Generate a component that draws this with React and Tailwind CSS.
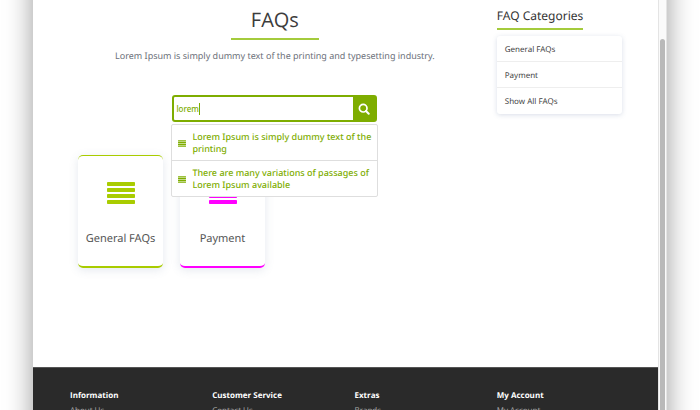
import React from "react";

const categories = ["General FAQs", "Payment", "Show All FAQs"];

const suggestions = [
  "Lorem Ipsum is simply dummy text of the printing",
  "There are many variations of passages of Lorem Ipsum available",
];

const footerColumns = [
  { title: "Information", link: "About Us" },
  { title: "Customer Service", link: "Contact Us" },
  { title: "Extras", link: "Brands" },
  { title: "My Account", link: "My Account" },
];

function BarsIcon({ className }) {
  return (
    <svg viewBox="0 0 28 22" className={className} fill="currentColor" aria-hidden="true">
      <rect x="0" y="0" width="28" height="4" rx="0.8" />
      <rect x="0" y="6" width="28" height="4" rx="0.8" />
      <rect x="0" y="12" width="28" height="4" rx="0.8" />
      <rect x="0" y="18" width="28" height="4" rx="0.8" />
    </svg>
  );
}

function SearchIcon() {
  return (
    <svg viewBox="0 0 12 12" className="size-3" fill="none" stroke="currentColor" aria-hidden="true">
      <circle cx="5.2" cy="5.2" r="3.8" strokeWidth="1.7" />
      <path d="M8 8l2.7 2.7" strokeWidth="2" strokeLinecap="round" />
    </svg>
  );
}

function Search() {
  return (
    <form className="relative mx-auto mt-8 w-[205px]" onSubmit={(e) => e.preventDefault()}>
      <div className="flex h-[27px] overflow-hidden rounded-[3px] border-2 border-[#7ead00] bg-[#7ead00]">
        <input
          aria-label="Search FAQs"
          defaultValue="lorem"
          className="min-w-0 flex-1 bg-white px-[2px] text-[8px] font-medium text-[#7ead00] outline-none"
        />
        <button type="submit" aria-label="Search" className="flex w-[22px] items-center justify-center text-white">
          <SearchIcon />
        </button>
      </div>
      <span className="absolute top-2 left-[27px] h-3 w-px bg-[#7ead00]" />
      <ul className="absolute top-[29px] -right-px -left-px z-10 rounded-[2px] border border-[#dedede] bg-white text-[9px] leading-3 font-medium text-[#7ead00]">
        {suggestions.map((text) => (
          <li key={text} className="border-b border-[#dedede] last:border-b-0">
            <a href="#faq" className="flex items-center gap-[6px] pt-[6px] pr-[6px] pb-[5px] pl-[6px]">
              <BarsIcon className="h-[7px] w-2 shrink-0" />
              <span>{text}</span>
            </a>
          </li>
        ))}
      </ul>
    </form>
  );
}

function Card({ label, border, icon }) {
  return (
    <a
      href="#category"
      className={`flex h-[113px] w-[85px] flex-col items-center rounded-[5px] border-t border-b-2 bg-white pt-[26px] shadow-[0_2px_10px_rgba(90,110,150,0.16)] ${border}`}
    >
      <BarsIcon className={`h-[22px] w-7 ${icon}`} />
      <span className="mt-[27px] text-[11px] leading-4 text-[#555]">{label}</span>
    </a>
  );
}

export default function App() {
  return (
    <div className="h-screen overflow-hidden bg-white font-['Noto_Sans','Open_Sans',sans-serif] [text-rendering:geometricPrecision]">
      <div className="-mt-10 mr-[33px] ml-[33px] flex h-[calc(100vh+80px)] bg-white pt-10 shadow-[0_0_26px_rgba(0,0,0,0.4)]">
        <div className="flex min-w-0 flex-1 flex-col">
          <main className="grid h-[367px] grid-cols-4 gap-x-[17px] pr-9 pl-[37px]">
            <section className="col-span-3">
              <header className="text-center">
                <h1 className="mx-auto h-10 w-[88px] border-b-2 border-[#a4cb3c] pt-[6px] font-['Open_Sans',sans-serif] text-[20px] leading-7 text-[#3c3c3c]">
                  FAQs
                </h1>
                <p className="mt-[7px] text-[9px] leading-[18px] text-[#6b7079]">
                  Lorem Ipsum is simply dummy text of the printing and typesetting industry.
                </p>
              </header>
              <div className="-mt-[2px]">
                <Search />
              </div>
              <div className="mt-[33px] flex gap-[17px] pl-2">
                <Card label="General FAQs" border="border-[#a9cc00]" icon="text-[#a9cc00]" />
                <Card label="Payment" border="border-[#ff00ff]" icon="text-[#ff00ff]" />
              </div>
            </section>
            <aside className="pt-[6px]">
              <h2 className="block w-fit border-b-2 border-[#a4cb3c] pb-[2px] text-[12px] leading-5 whitespace-nowrap text-[#333]">
                FAQ Categories
              </h2>
              <nav className="mt-[6px] rounded-[3px] bg-white shadow-[0_1px_5px_rgba(80,100,150,0.22)]">
                {categories.map((name) => (
                  <a
                    key={name}
                    href="#category"
                    className="flex h-[26px] items-center border-b border-[#eee] px-2 pt-[2px] text-[8px] text-[#444] last:border-b-0"
                  >
                    {name}
                  </a>
                ))}
              </nav>
            </aside>
          </main>
          <footer className="grid flex-1 grid-cols-4 gap-x-[17px] border-t border-[#555] bg-[#2a2a2a] pt-5 pr-9 pl-[37px] font-['Open_Sans',sans-serif]">
            {footerColumns.map(({ title, link }) => (
              <div key={title}>
                <h3 className="text-[8px] leading-4 font-bold text-white">{title}</h3>
                <a href="#page" className="block text-[8px] leading-[14px] text-[#aaa]">
                  {link}
                </a>
              </div>
            ))}
          </footer>
        </div>
        <div className="flex w-[9px] justify-center border-x border-[#e4e4e4] bg-[#fafafa] pt-[39px]">
          <div className="w-[5px] rounded-t-full bg-[#b9b9b9]" />
        </div>
      </div>
    </div>
  );
}
